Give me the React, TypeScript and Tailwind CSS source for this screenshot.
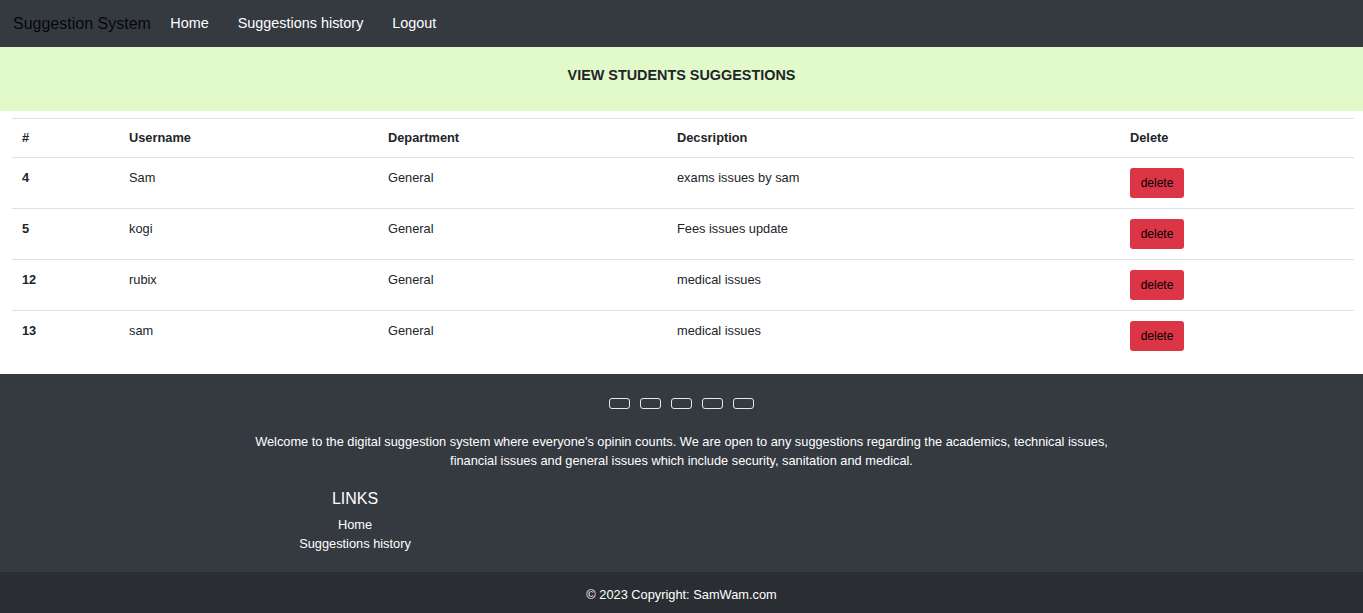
const rows = [
  { id: 4, username: 'Sam', department: 'General', description: 'exams issues by sam' },
  { id: 5, username: 'kogi', department: 'General', description: 'Fees issues update' },
  { id: 12, username: 'rubix', department: 'General', description: 'medical issues' },
  { id: 13, username: 'sam', department: 'General', description: 'medical issues' },
];

export default function App() {
  return (
    <div className="min-h-screen bg-white text-[#212529] font-['Liberation_Sans',Arial,sans-serif]">
      {/* Navbar */}
      <nav className="flex h-[47px] items-center bg-[#343a40]">
        <span className="ml-[13px] mr-[5px] text-[16px] text-black/90">Suggestion System</span>
        <ul className="flex text-[14.4px] text-white">
          <li className="px-[14.5px]">Home</li>
          <li className="px-[14.5px]">Suggestions history</li>
          <li className="px-[14.5px]">Logout</li>
        </ul>
      </nav>

      {/* Title band */}
      <div className="flex h-[64px] items-center justify-center bg-[#e2f9c9] pb-[6px]">
        <h2 className="text-[14.4px] font-bold uppercase text-[#212529]">View students suggestions</h2>
      </div>

      {/* Table */}
      <div className="pl-[12px] pr-[9px] pt-[7px] pb-[13px]">
        <table className="w-full table-fixed border-collapse text-left text-[12.8px] leading-[19px]">
          <colgroup>
            <col className="w-[107px]" />
            <col className="w-[259px]" />
            <col className="w-[289px]" />
            <col className="w-[453px]" />
            <col />
          </colgroup>
          <thead>
            <tr className="border-y border-[#dee2e6]">
              <th className="px-[10px] pt-[9px] pb-[10px] font-bold">#</th>
              <th className="px-[10px] pt-[9px] pb-[10px] font-bold">Username</th>
              <th className="px-[10px] pt-[9px] pb-[10px] font-bold">Department</th>
              <th className="px-[10px] pt-[9px] pb-[10px] font-bold">Decsription</th>
              <th className="px-[10px] pt-[9px] pb-[10px] font-bold">Delete</th>
            </tr>
          </thead>
          <tbody>
            {rows.map((r, i) => (
              <tr key={r.id} className={i < rows.length - 1 ? 'border-b border-[#dee2e6]' : ''}>
                <td className="px-[10px] py-[10px] align-top font-bold">{r.id}</td>
                <td className="px-[10px] py-[10px] align-top">{r.username}</td>
                <td className="px-[10px] py-[10px] align-top">{r.department}</td>
                <td className="px-[10px] py-[10px] align-top">{r.description}</td>
                <td className="px-[10px] py-[10px] align-top">
                  <button className="h-[30px] w-[54px] rounded-[3px] bg-[#dc3545] pt-[1px] text-[12px] text-black">
                    delete
                  </button>
                </td>
              </tr>
            ))}
          </tbody>
        </table>
      </div>

      {/* Footer */}
      <footer className="bg-[#343a40] text-white">
        <div className="flex flex-col items-center pt-[24px] pb-[19px]">
          <div className="flex gap-[10px]">
            {[0, 1, 2, 3, 4].map((k) => (
              <span key={k} className="block h-[11px] w-[21px] rounded-[3px] border border-[#e5e7eb]" />
            ))}
          </div>
          <p className="mt-[23px] w-[880px] text-center text-[12.8px] leading-[19px]">
            Welcome to the digital suggestion system where everyone's opinin counts. We are open to any suggestions
            regarding the academics, technical issues, financial issues and general issues which include security,
            sanitation and medical.
          </p>
          <div className="mt-[19px] flex w-[1188px]">
            <div className="flex w-[535px] flex-col items-center">
              <h5 className="text-[16px] leading-[19px] uppercase">Links</h5>
              <ul className="mt-[7px] text-center text-[12.8px] leading-[19px]">
                <li>Home</li>
                <li>Suggestions history</li>
              </ul>
            </div>
          </div>
        </div>
        <div className="flex h-[41px] justify-center bg-[#2a2e33] pt-[15px] text-[12.8px] leading-[15px]">
          © 2023 Copyright: SamWam.com
        </div>
      </footer>
    </div>
  );
}
